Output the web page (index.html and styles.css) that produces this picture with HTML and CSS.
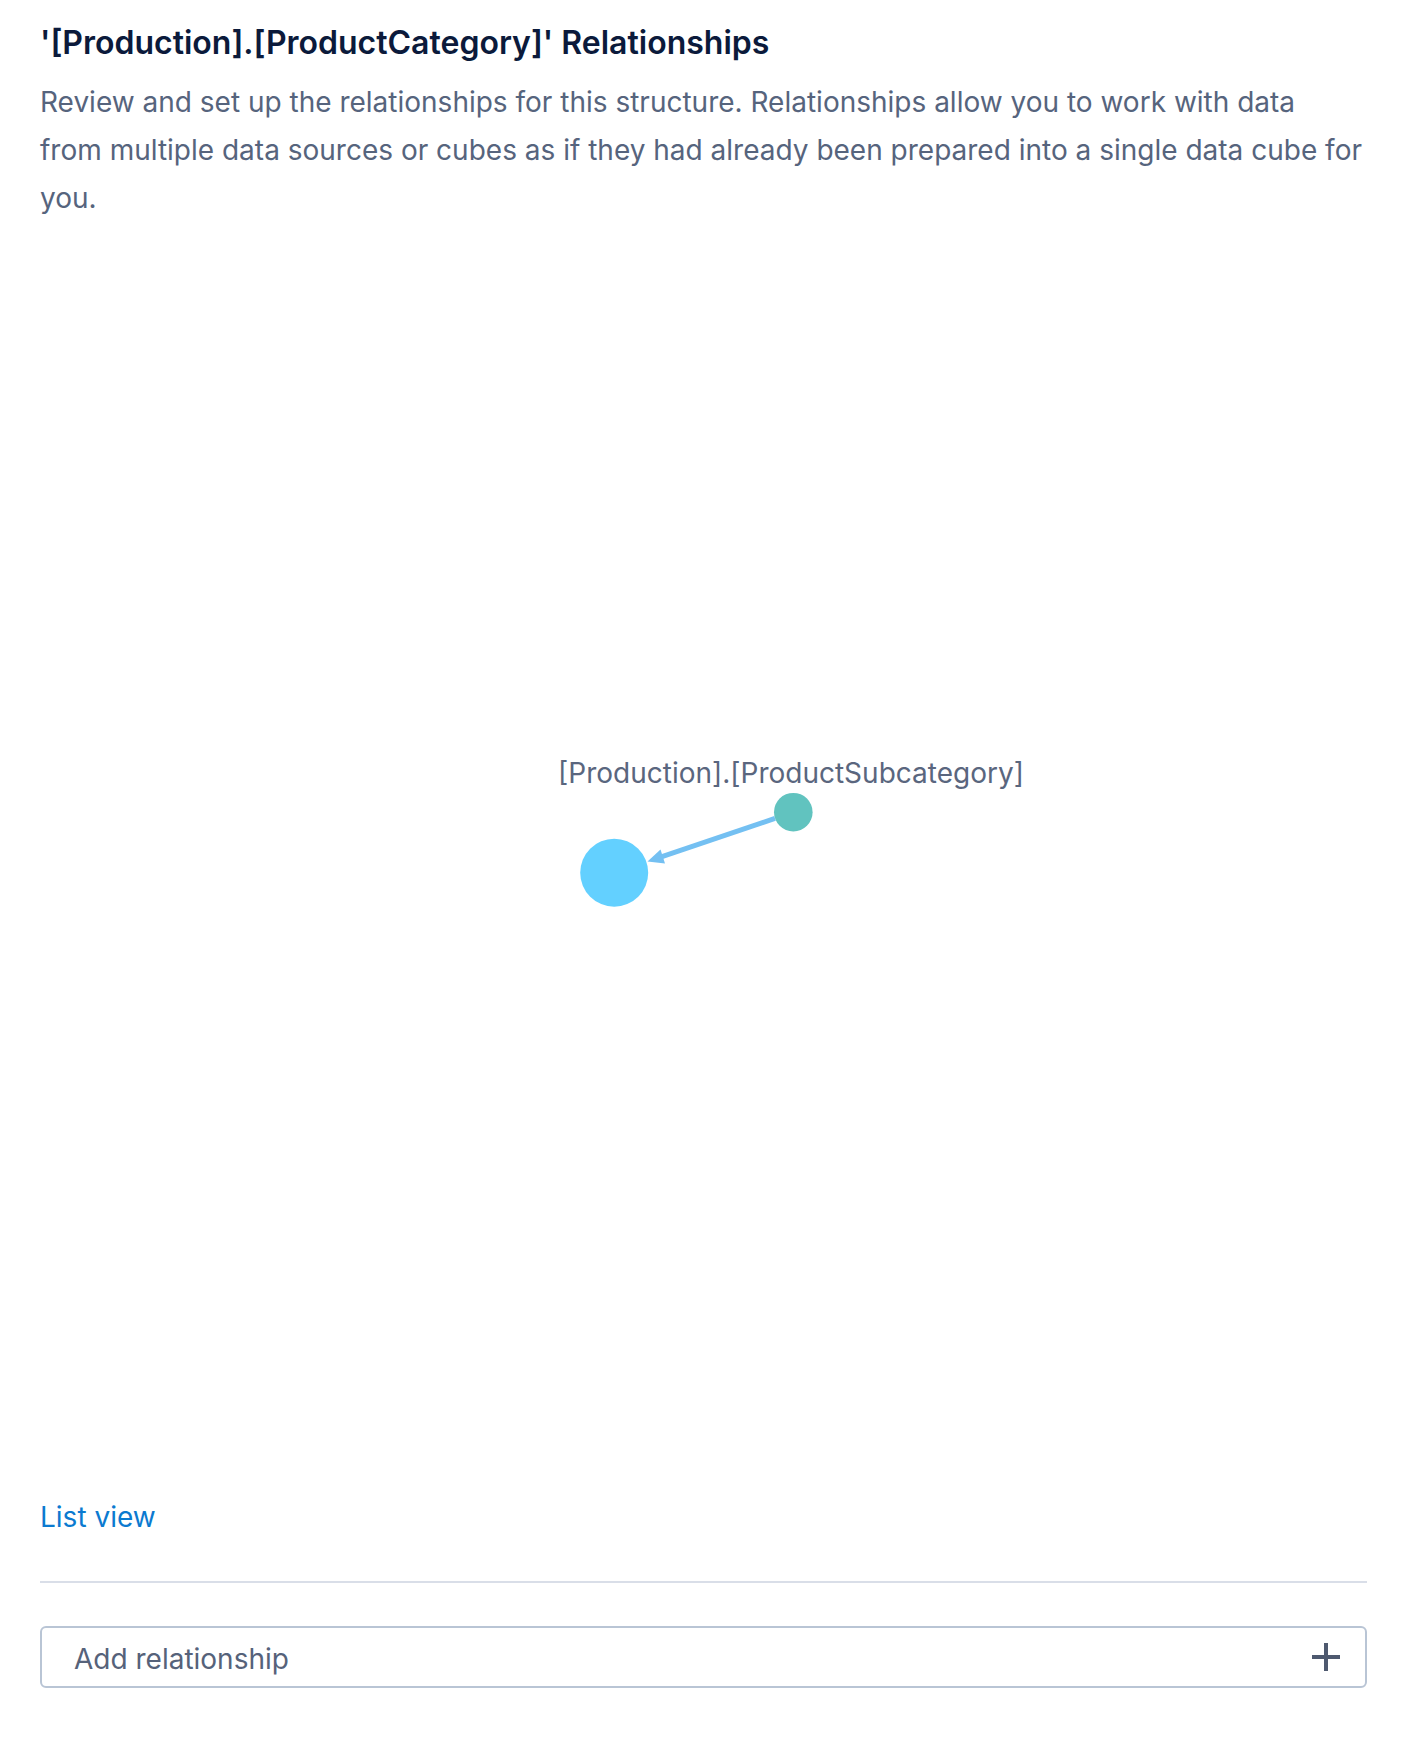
FILE: index.html
```html
<!DOCTYPE html>
<html lang="en">
<head>
<meta charset="utf-8">
<title>Relationships</title>
<link rel="stylesheet" href="styles.css">
</head>
<body>
<div class="page">
  <h1 class="title">'[Production].[ProductCategory]' Relationships</h1>
  <p class="intro">Review and set up the relationships for this structure. Relationships allow you to work with data from multiple data sources or cubes as if they had already been prepared into a single data cube for you.</p>
  <div class="canvas">
    <svg class="graph" width="1327" height="1271" viewBox="0 0 1327 1271" xmlns="http://www.w3.org/2000/svg">
      <line x1="735" y1="596.4" x2="622" y2="634.6" class="edge"/>
      <polygon points="607.5,639.5 625,641.5 620.5,627.5" class="edge-head"/>
      <circle cx="753.3" cy="590.2" r="19.3" class="node-small"/>
      <circle cx="574.2" cy="650.7" r="34" class="node-main"/>
      <text x="751" y="561.2" text-anchor="middle" class="node-label">[Production].[ProductSubcategory]</text>
    </svg>
  </div>
  <a class="list-link" href="#">List view</a>
  <hr class="divider">
  <div class="add-box">
    <span class="add-label">Add relationship</span>
    <svg class="plus" width="28" height="28" viewBox="0 0 28 28" xmlns="http://www.w3.org/2000/svg">
      <rect x="12" y="0" width="4" height="28"/>
      <rect x="0" y="12" width="28" height="4"/>
    </svg>
  </div>
</div>
</body>
</html>
```

FILE: styles.css
```css
html, body {
  margin: 0;
  padding: 0;
  background: #ffffff;
}

body {
  font-family: Inter, "Noto Sans", "Liberation Sans", sans-serif;
}

.page {
  padding: 0 55px 0 40px;
}

.title {
  margin: 23px 0 0;
  font-size: 32px;
  line-height: 40px;
  font-weight: 600;
  color: #0b1a3b;
}

.intro {
  margin: 15px 4px 0 0;
  font-size: 28px;
  line-height: 48px;
  font-weight: 400;
  color: #56647d;
}

.canvas {
  height: 1271px;
  position: relative;
}

.graph {
  display: block;
}

.edge {
  stroke: #74c0f2;
  stroke-width: 5;
}

.edge-head {
  fill: #74c0f2;
}

.node-small {
  fill: #61c3bf;
}

.node-main {
  fill: #63d0ff;
}

.node-label {
  font-family: Inter, "Noto Sans", "Liberation Sans", sans-serif;
  font-size: 28px;
  fill: #5a667e;
}

.list-link {
  display: block;
  font-size: 28px;
  line-height: 48px;
  color: #0b7ad0;
  text-decoration: none;
}

.divider {
  margin: 40px 0 0;
  border: 0;
  height: 2px;
  background: #d9dee8;
}

.add-box {
  margin-top: 43px;
  height: 58px;
  border: 2px solid #b9c5d5;
  border-radius: 6px;
  display: flex;
  align-items: center;
  justify-content: space-between;
  padding: 0 25px 0 32px;
}

.add-label {
  font-size: 28px;
  line-height: 54px;
  padding-top: 4px;
  color: #56627a;
}

.plus {
  display: block;
  fill: #4e596f;
}
```
